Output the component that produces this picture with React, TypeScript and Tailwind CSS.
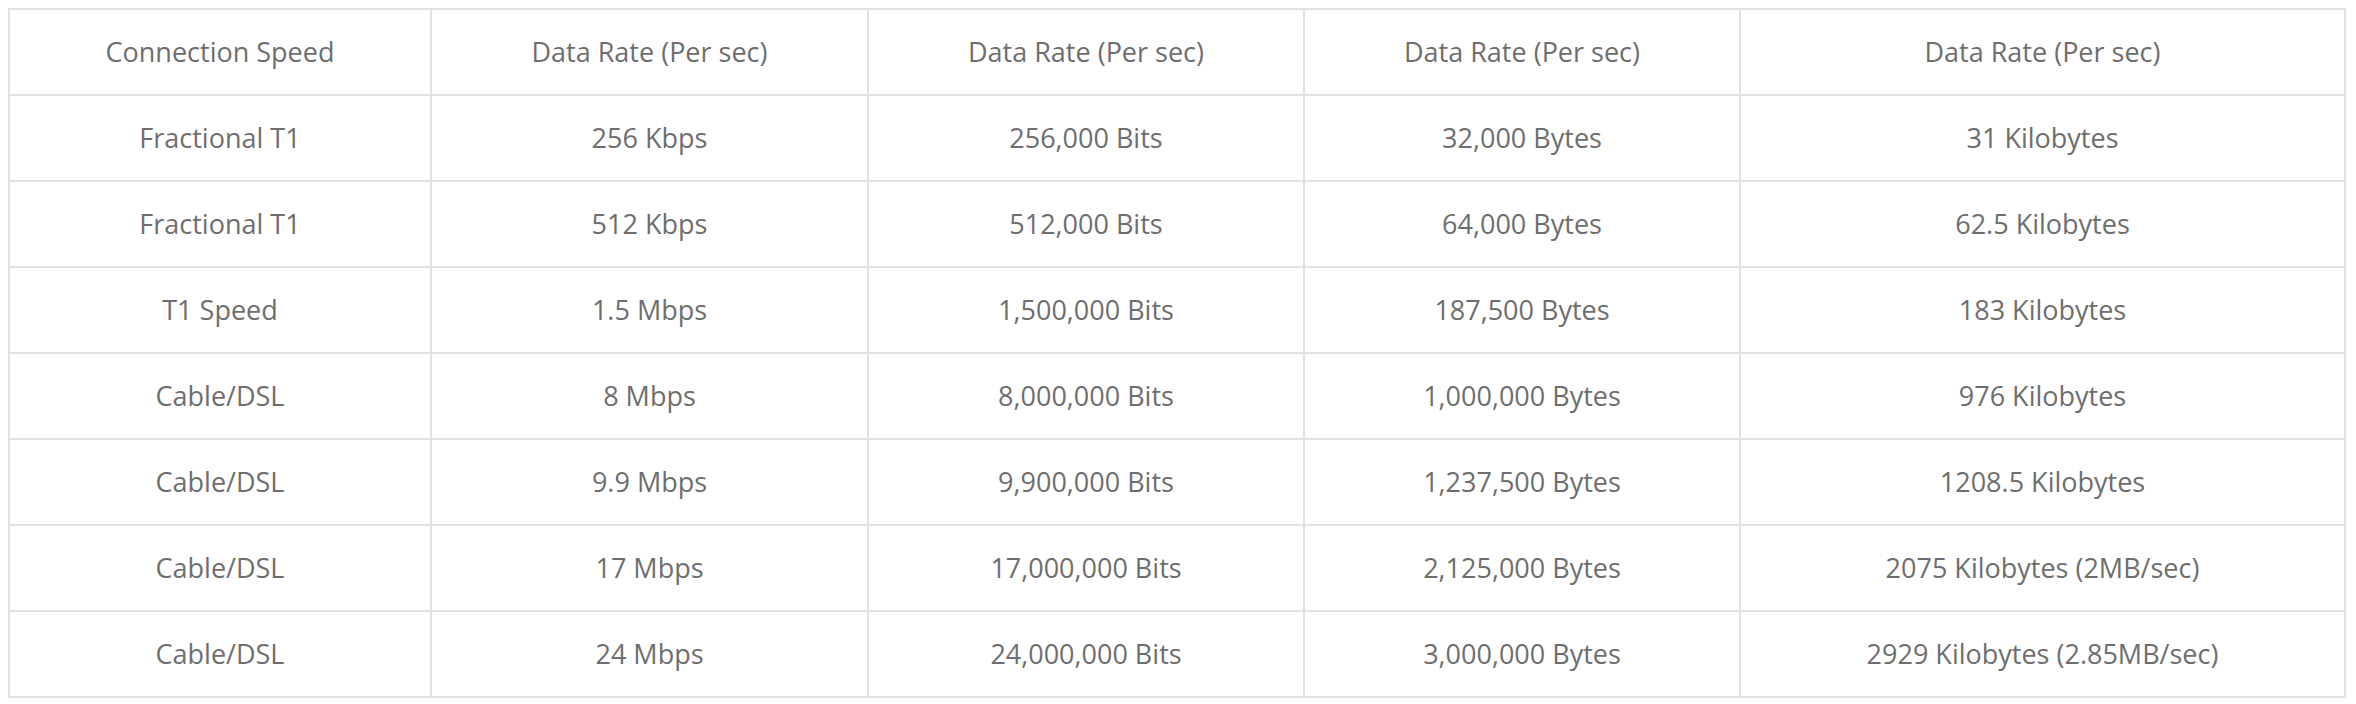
const HEADERS = [
  "Connection Speed",
  "Data Rate (Per sec)",
  "Data Rate (Per sec)",
  "Data Rate (Per sec)",
  "Data Rate (Per sec)",
];

const ROWS: string[][] = [
  ["Fractional T1", "256 Kbps", "256,000 Bits", "32,000 Bytes", "31 Kilobytes"],
  ["Fractional T1", "512 Kbps", "512,000 Bits", "64,000 Bytes", "62.5 Kilobytes"],
  ["T1 Speed", "1.5 Mbps", "1,500,000 Bits", "187,500 Bytes", "183 Kilobytes"],
  ["Cable/DSL", "8 Mbps", "8,000,000 Bits", "1,000,000 Bytes", "976 Kilobytes"],
  ["Cable/DSL", "9.9 Mbps", "9,900,000 Bits", "1,237,500 Bytes", "1208.5 Kilobytes"],
  ["Cable/DSL", "17 Mbps", "17,000,000 Bits", "2,125,000 Bytes", "2075 Kilobytes (2MB/sec)"],
  ["Cable/DSL", "24 Mbps", "24,000,000 Bits", "3,000,000 Bytes", "2929 Kilobytes (2.85MB/sec)"],
];

const COL_WIDTHS = ["w-[422px]", "w-[437px]", "w-[436px]", "w-[436px]", "w-[605px]"];

const cell =
  "h-[86px] border-2 border-[#e2e2e2] p-0 text-center align-middle font-normal";

export default function App() {
  return (
    <div
      className="min-h-[704px] bg-white px-[8px] pt-[8px] text-[27px] text-[#6e6e6e]"
      style={{ fontFamily: '"Open Sans", "Noto Sans", sans-serif' }}
    >
      <table className="w-[2338px] table-fixed border-collapse">
        <colgroup>
          {COL_WIDTHS.map((w, i) => (
            <col key={i} className={w} />
          ))}
        </colgroup>
        <thead>
          <tr>
            {HEADERS.map((h, i) => (
              <th key={i} className={cell}>
                {h}
              </th>
            ))}
          </tr>
        </thead>
        <tbody>
          {ROWS.map((row, r) => (
            <tr key={r}>
              {row.map((value, c) => (
                <td key={c} className={cell}>
                  {value}
                </td>
              ))}
            </tr>
          ))}
        </tbody>
      </table>
    </div>
  );
}
